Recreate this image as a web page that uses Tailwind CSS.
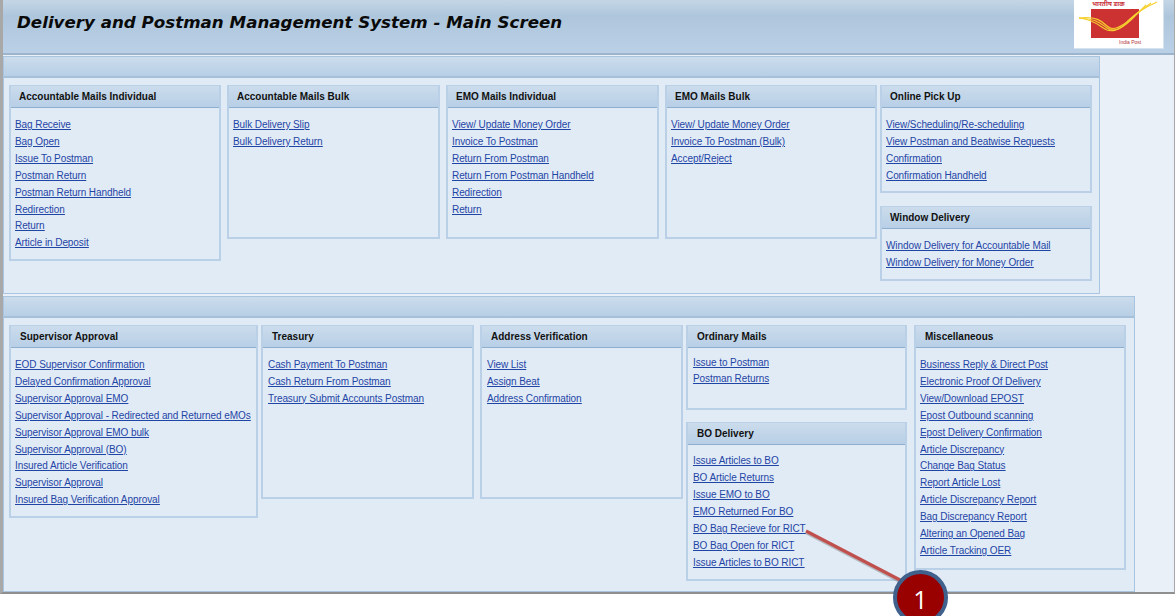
<!DOCTYPE html>
<html lang="en">
  <head>
    <meta charset="UTF-8" />
    <title>Delivery and Postman Management System - Main Screen</title>
    <script src="https://cdn.jsdelivr.net/npm/@tailwindcss/browser@4"></script>
  </head>
  <body class="relative w-[1175px] h-[616px] overflow-hidden bg-white font-['Liberation_Sans',sans-serif]">
    <div class="h-[594px] border-b-2 border-b-[#8f8f8f] border-l-[3px] border-l-[#a8a8a8] border-r border-r-[#a8a8a8] bg-[#eaf0f8]">
      <!-- Title bar -->
      <header class="h-[55px] border-b-2 border-[#9db5cc] bg-linear-to-b from-[#c4d6e6] via-[#aec6dc] via-30% to-[#bad0e6] pl-[14px] pt-[11px]">
        <h1 class="text-[16.7px] leading-[22px] font-bold italic text-[#0a0a0a] font-['DejaVu_Sans',sans-serif]">Delivery and Postman Management System - Main Screen</h1>
      </header>

      <!-- Top panel -->
      <section class="mt-px w-[1097px] h-[238px] border border-[#a9c4de] bg-[#e1ebf6]">
        <div class="h-[21px] border-b-2 border-[#a6c0da] bg-linear-to-b from-[#cbdcec] to-[#b8cfe6]"></div>
        <div class="flex items-start pl-[5px] pt-[7px]">
          <div class="w-[212px] h-[176px] flex flex-col border-2 border-[#b9d0e7]">
            <h2 class="h-[22px] shrink-0 -mt-px border-b border-[#8fafcf] bg-linear-to-b from-[#cbdcec] to-[#b8cfe6] pl-[8px] text-[10px] leading-[21px] font-bold text-[#111]">Accountable Mails Individual</h2>
            <div class="flex flex-col items-start pl-[4px] pt-[9px] text-[10px] tracking-[-0.08px] leading-[16.9px] text-[#1f45a5] underline">
              <a href="#">Bag Receive</a>
              <a href="#">Bag Open</a>
              <a href="#">Issue To Postman</a>
              <a href="#">Postman Return</a>
              <a href="#">Postman Return Handheld</a>
              <a href="#">Redirection</a>
              <a href="#">Return</a>
              <a href="#">Article in Deposit</a>
            </div>
          </div>
          <div class="ml-[6px] w-[213px] h-[154px] flex flex-col border-2 border-[#b9d0e7]">
            <h2 class="h-[22px] shrink-0 -mt-px border-b border-[#8fafcf] bg-linear-to-b from-[#cbdcec] to-[#b8cfe6] pl-[8px] text-[10px] leading-[21px] font-bold text-[#111]">Accountable Mails Bulk</h2>
            <div class="flex flex-col items-start pl-[4px] pt-[9px] text-[10px] tracking-[-0.08px] leading-[16.9px] text-[#1f45a5] underline">
              <a href="#">Bulk Delivery Slip</a>
              <a href="#">Bulk Delivery Return</a>
            </div>
          </div>
          <div class="ml-[6px] w-[213px] h-[154px] flex flex-col border-2 border-[#b9d0e7]">
            <h2 class="h-[22px] shrink-0 -mt-px border-b border-[#8fafcf] bg-linear-to-b from-[#cbdcec] to-[#b8cfe6] pl-[8px] text-[10px] leading-[21px] font-bold text-[#111]">EMO Mails Individual</h2>
            <div class="flex flex-col items-start pl-[4px] pt-[9px] text-[10px] tracking-[-0.08px] leading-[16.9px] text-[#1f45a5] underline">
              <a href="#">View/ Update Money Order</a>
              <a href="#">Invoice To Postman</a>
              <a href="#">Return From Postman</a>
              <a href="#">Return From Postman Handheld</a>
              <a href="#">Redirection</a>
              <a href="#">Return</a>
            </div>
          </div>
          <div class="ml-[6px] w-[212px] h-[154px] flex flex-col border-2 border-[#b9d0e7]">
            <h2 class="h-[22px] shrink-0 -mt-px border-b border-[#8fafcf] bg-linear-to-b from-[#cbdcec] to-[#b8cfe6] pl-[8px] text-[10px] leading-[21px] font-bold text-[#111]">EMO Mails Bulk</h2>
            <div class="flex flex-col items-start pl-[4px] pt-[9px] text-[10px] tracking-[-0.08px] leading-[16.9px] text-[#1f45a5] underline">
              <a href="#">View/ Update Money Order</a>
              <a href="#">Invoice To Postman (Bulk)</a>
              <a href="#">Accept/Reject</a>
            </div>
          </div>
          <div class="ml-[3px] w-[212px] flex flex-col gap-[13px]">
            <div class="h-[108px] flex flex-col border-2 border-[#b9d0e7]">
              <h2 class="h-[22px] shrink-0 -mt-px border-b border-[#8fafcf] bg-linear-to-b from-[#cbdcec] to-[#b8cfe6] pl-[8px] text-[10px] leading-[21px] font-bold text-[#111]">Online Pick Up</h2>
              <div class="flex flex-col items-start pl-[4px] pt-[9px] text-[10px] tracking-[-0.08px] leading-[16.9px] text-[#1f45a5] underline">
                <a href="#">View/Scheduling/Re-scheduling</a>
                <a href="#">View Postman and Beatwise Requests</a>
                <a href="#">Confirmation</a>
                <a href="#">Confirmation Handheld</a>
              </div>
            </div>
            <div class="h-[75px] flex flex-col border-2 border-[#b9d0e7]">
              <h2 class="h-[22px] shrink-0 -mt-px border-b border-[#8fafcf] bg-linear-to-b from-[#cbdcec] to-[#b8cfe6] pl-[8px] text-[10px] leading-[21px] font-bold text-[#111]">Window Delivery</h2>
              <div class="flex flex-col items-start pl-[4px] pt-[9px] text-[10px] tracking-[-0.08px] leading-[16.9px] text-[#1f45a5] underline">
                <a href="#">Window Delivery for Accountable Mail</a>
                <a href="#">Window Delivery for Money Order</a>
              </div>
            </div>
          </div>
        </div>
      </section>

      <!-- Bottom panel -->
      <section class="mt-[2px] w-[1132px] h-[296px] border border-[#a9c4de] bg-[#e1ebf6]">
        <div class="h-[21px] border-b-2 border-[#a6c0da] bg-linear-to-b from-[#cbdcec] to-[#b8cfe6]"></div>
        <div class="flex items-start pl-[5px] pt-[7px]">
          <div class="w-[249px] h-[193px] flex flex-col border-2 border-[#b9d0e7]">
            <h2 class="h-[22px] shrink-0 -mt-px border-b border-[#8fafcf] bg-linear-to-b from-[#cbdcec] to-[#b8cfe6] pl-[9px] text-[10px] leading-[21px] font-bold text-[#111]">Supervisor Approval</h2>
            <div class="flex flex-col items-start pl-[4px] pt-[9px] text-[10px] tracking-[-0.08px] leading-[16.9px] text-[#1f45a5] underline">
              <a href="#">EOD Supervisor Confirmation</a>
              <a href="#">Delayed Confirmation Approval</a>
              <a href="#">Supervisor Approval EMO</a>
              <a href="#">Supervisor Approval - Redirected and Returned eMOs</a>
              <a href="#">Supervisor Approval EMO bulk</a>
              <a href="#">Supervisor Approval (BO)</a>
              <a href="#">Insured Article Verification</a>
              <a href="#">Supervisor Approval</a>
              <a href="#">Insured Bag Verification Approval</a>
            </div>
          </div>
          <div class="ml-[3px] w-[213px] h-[174px] flex flex-col border-2 border-[#b9d0e7]">
            <h2 class="h-[22px] shrink-0 -mt-px border-b border-[#8fafcf] bg-linear-to-b from-[#cbdcec] to-[#b8cfe6] pl-[9px] text-[10px] leading-[21px] font-bold text-[#111]">Treasury</h2>
            <div class="flex flex-col items-start pl-[5px] pt-[9px] text-[10px] tracking-[-0.08px] leading-[16.9px] text-[#1f45a5] underline">
              <a href="#">Cash Payment To Postman</a>
              <a href="#">Cash Return From Postman</a>
              <a href="#">Treasury Submit Accounts Postman</a>
            </div>
          </div>
          <div class="ml-[6px] w-[203px] h-[174px] flex flex-col border-2 border-[#b9d0e7]">
            <h2 class="h-[22px] shrink-0 -mt-px border-b border-[#8fafcf] bg-linear-to-b from-[#cbdcec] to-[#b8cfe6] pl-[9px] text-[10px] leading-[21px] font-bold text-[#111]">Address Verification</h2>
            <div class="flex flex-col items-start pl-[5px] pt-[9px] text-[10px] tracking-[-0.08px] leading-[16.9px] text-[#1f45a5] underline">
              <a href="#">View List</a>
              <a href="#">Assign Beat</a>
              <a href="#">Address Confirmation</a>
            </div>
          </div>
          <div class="ml-[3px] w-[221px] flex flex-col gap-[12px]">
            <div class="h-[85px] flex flex-col border-2 border-[#b9d0e7]">
              <h2 class="h-[22px] shrink-0 -mt-px border-b border-[#8fafcf] bg-linear-to-b from-[#cbdcec] to-[#b8cfe6] pl-[9px] text-[10px] leading-[21px] font-bold text-[#111]">Ordinary Mails</h2>
              <div class="flex flex-col items-start pl-[5px] pt-[7px] text-[10px] tracking-[-0.08px] leading-[15.5px] text-[#1f45a5] underline">
                <a href="#">Issue to Postman</a>
                <a href="#">Postman Returns</a>
              </div>
            </div>
            <div class="h-[159px] flex flex-col border-2 border-[#b9d0e7]">
              <h2 class="h-[22px] shrink-0 -mt-px border-b border-[#8fafcf] bg-linear-to-b from-[#cbdcec] to-[#b8cfe6] pl-[9px] text-[10px] leading-[21px] font-bold text-[#111]">BO Delivery</h2>
              <div class="flex flex-col items-start pl-[5px] pt-[7px] text-[10px] tracking-[-0.08px] leading-[17px] text-[#1f45a5] underline">
                <a href="#">Issue Articles to BO</a>
                <a href="#">BO Article Returns</a>
                <a href="#">Issue EMO to BO</a>
                <a href="#">EMO Returned For BO</a>
                <a href="#">BO Bag Recieve for RICT</a>
                <a href="#">BO Bag Open for RICT</a>
                <a href="#">Issue Articles to BO RICT</a>
              </div>
            </div>
          </div>
          <div class="ml-[7px] w-[212px] h-[245px] flex flex-col border-2 border-[#b9d0e7]">
            <h2 class="h-[22px] shrink-0 -mt-px border-b border-[#8fafcf] bg-linear-to-b from-[#cbdcec] to-[#b8cfe6] pl-[9px] text-[10px] leading-[21px] font-bold text-[#111]">Miscellaneous</h2>
            <div class="flex flex-col items-start pl-[4px] pt-[9px] text-[10px] tracking-[-0.08px] leading-[16.9px] text-[#1f45a5] underline">
              <a href="#">Business Reply &amp; Direct Post</a>
              <a href="#">Electronic Proof Of Delivery</a>
              <a href="#">View/Download EPOST</a>
              <a href="#">Epost Outbound scanning</a>
              <a href="#">Epost Delivery Confirmation</a>
              <a href="#">Article Discrepancy</a>
              <a href="#">Change Bag Status</a>
              <a href="#">Report Article Lost</a>
              <a href="#">Article Discrepancy Report</a>
              <a href="#">Bag Discrepancy Report</a>
              <a href="#">Altering an Opened Bag</a>
              <a href="#">Article Tracking OER</a>
            </div>
          </div>
        </div>
      </section>
    </div>

    <!-- India Post logo -->
    <div class="absolute left-[1074px] top-0 w-[90px] h-[49px] bg-white border-r border-b border-[#d5e2ef]">
      <span class="absolute left-[18px] top-0 text-[6.5px] leading-[8px] font-bold text-[#c8323a] font-['Noto_Sans','DejaVu_Sans',sans-serif]">भारतीय डाक</span>
      <span class="absolute left-[45px] top-[39px] text-[5px] leading-[6px] text-[#b0353a]">India Post</span>
      <svg class="absolute left-0 top-0" width="90" height="49" viewBox="0 0 90 49">
        <rect x="17" y="9" width="48" height="29" fill="#cd3232" />
        <g fill="none" stroke="#f5d02e" stroke-width="1.1">
          <path d="M5 18C22 16 28 21 33 26C38 31 47 28 56 19C62 13 72 7 83 2" />
          <path d="M5 18C24 19 27 24 33 28C40 33 49 28 58 18C63 13 70 8 77 3" />
          <path d="M5 18C22 20 26 27 33 30C41 33 51 26 60 17C64 13 68 9 72 5" />
        </g>
      </svg>
    </div>

    <!-- Callout -->
    <svg class="absolute left-0 top-0 pointer-events-none" width="1175" height="616" viewBox="0 0 1175 616">
      <line x1="806" y1="531" x2="902" y2="581" stroke="#8a8a8a" stroke-opacity="0.5" stroke-width="3.5" transform="translate(0 1.5)" />
      <line x1="806" y1="531" x2="902" y2="581" stroke="#c0504d" stroke-width="3.2" />
    </svg>
    <div class="absolute left-[893px] top-[570px] w-[55px] h-[55px] rounded-full bg-[#990000] border-[4px] border-[#3f618c] flex justify-center text-white text-[25px] leading-[50px] font-['Open_Sans',sans-serif]">1</div>
  </body>
</html>
